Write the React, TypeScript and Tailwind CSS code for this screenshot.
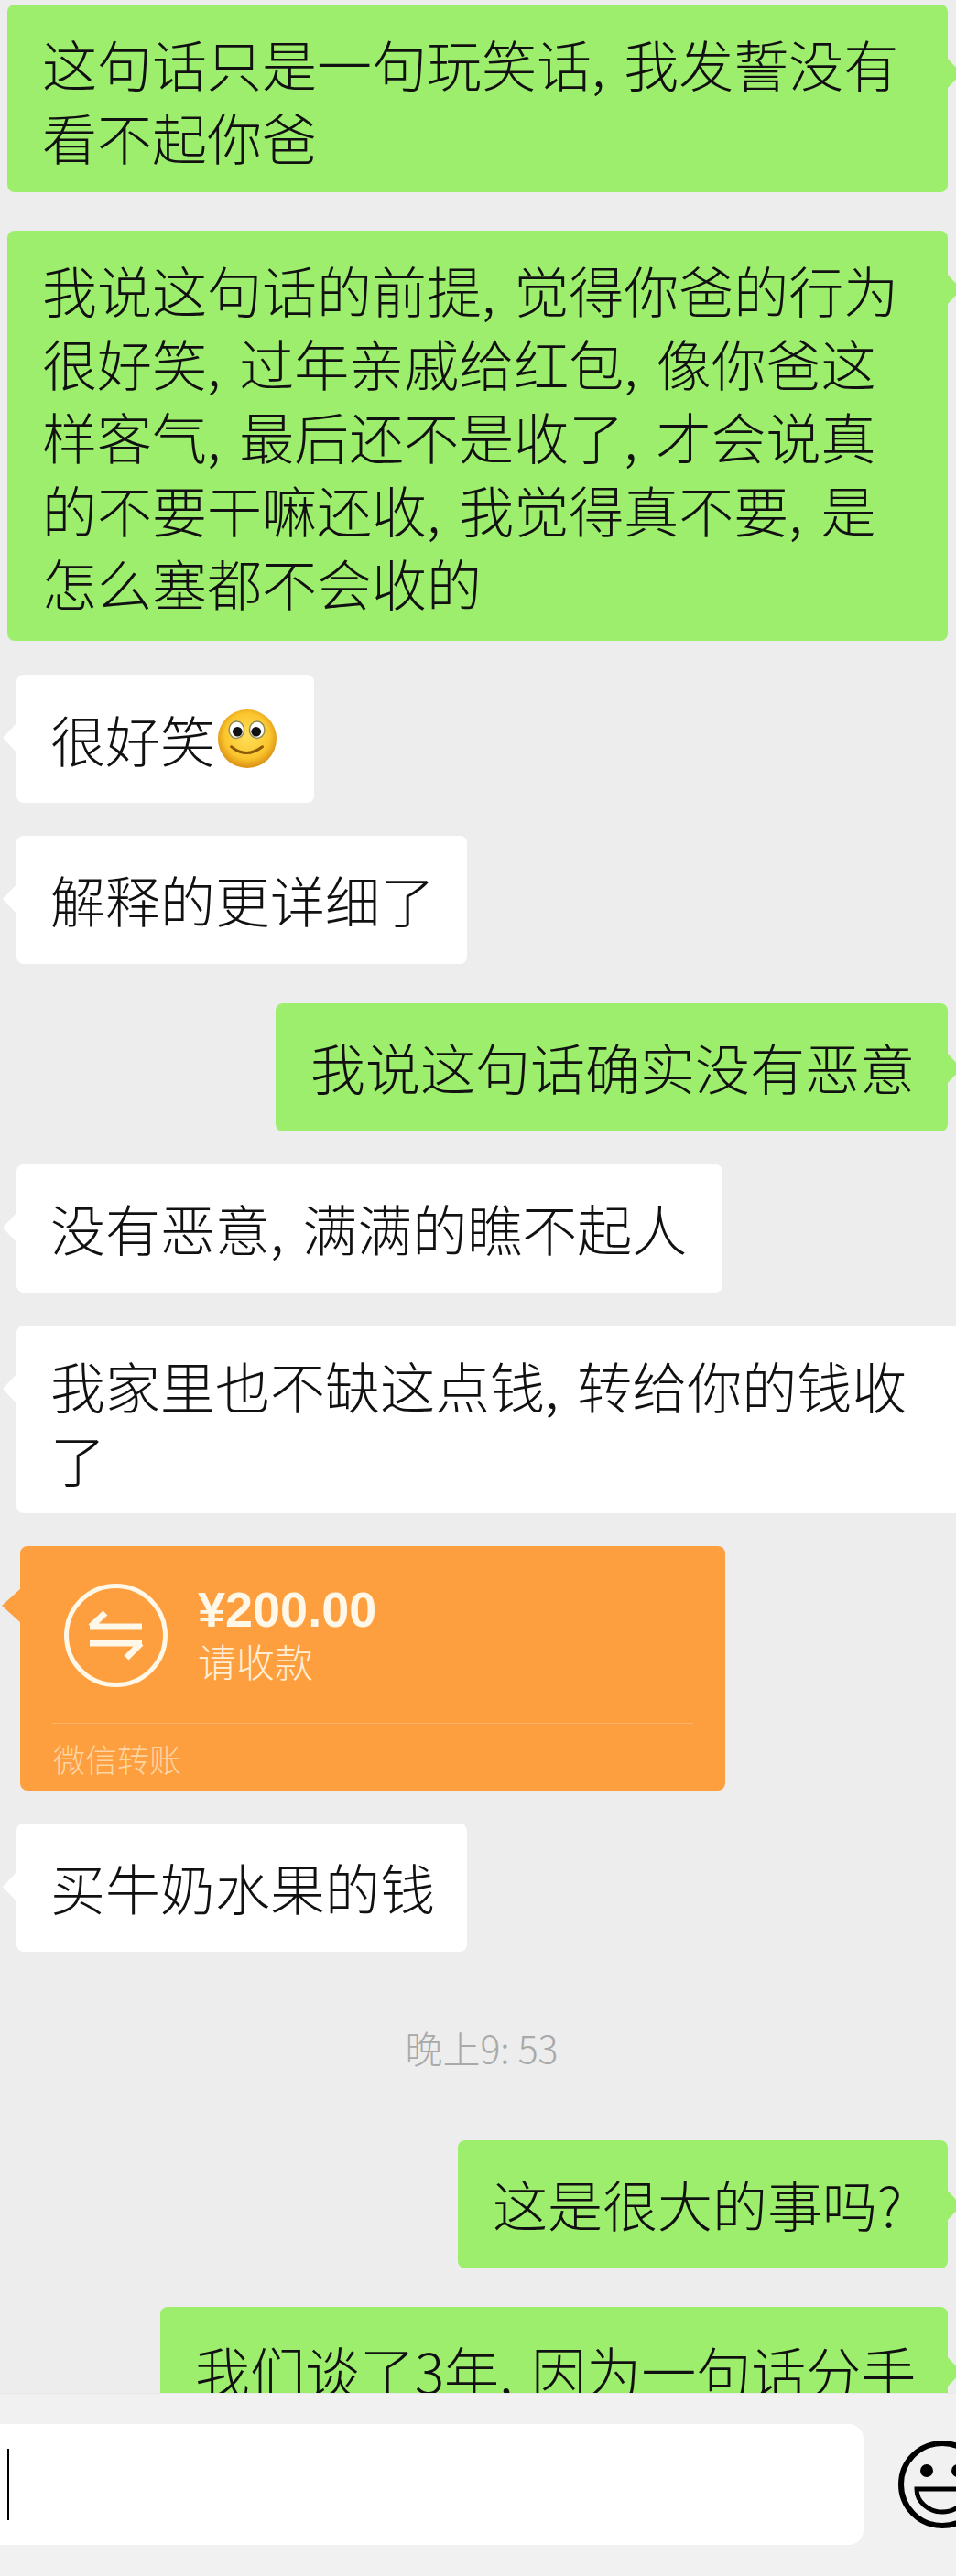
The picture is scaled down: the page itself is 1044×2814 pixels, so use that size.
const CJK = "font-['Noto_Sans_CJK_SC','Liberation_Sans',sans-serif]"

function Tail({ side, top, color, w = 16, h = 34 }: { side: 'left' | 'right'; top: number; color: string; w?: number; h?: number }) {
  return (
    <svg
      width={w}
      height={h}
      viewBox={`0 0 ${w} ${h}`}
      className="absolute"
      style={side === 'left' ? { top, left: -w + 1 } : { top, right: -w + 1 }}
    >
      <path d={side === 'left' ? `M${w} 0 L0 ${h / 2} L${w} ${h} Z` : `M0 0 L${w} ${h / 2} L0 ${h} Z`} fill={color} />
    </svg>
  )
}

function Sent({ lines, className, tailTop = 54 }: { lines: string[]; className: string; tailTop?: number }) {
  return (
    <div className={`relative mr-[9px] shrink-0 self-end rounded-lg bg-[#9eee6e] pl-[38px] text-[60px] leading-[80px] font-light [word-spacing:7px] text-[#111] ${className}`}>
      {lines.map((l) => (
        <div key={l} className="whitespace-nowrap">{l}</div>
      ))}
      <Tail side="right" top={tailTop} color="#9eee6e" />
    </div>
  )
}

function Received({ lines, className }: { lines: string[]; className: string }) {
  return (
    <div className={`relative ml-[18px] shrink-0 self-start rounded-lg bg-white pl-[37px] text-[60px] leading-[80px] font-light [word-spacing:7px] text-[#111] ${className}`}>
      {lines.map((l) => (
        <div key={l} className="whitespace-nowrap">{l}</div>
      ))}
      <Tail side="left" top={52} color="#ffffff" />
    </div>
  )
}

function SmileEmoji() {
  return (
    <svg width="68" height="68" viewBox="0 0 70 70" className="ml-[1px] shrink-0">
      <defs>
        <radialGradient id="face" cx="50%" cy="45%" r="55%">
          <stop offset="0%" stopColor="#ffe05a" />
          <stop offset="70%" stopColor="#fbc52e" />
          <stop offset="100%" stopColor="#d98f12" />
        </radialGradient>
      </defs>
      <circle cx="35" cy="35" r="33" fill="url(#face)" />
      <ellipse cx="23" cy="25" rx="8.5" ry="9.5" fill="#fff" stroke="#8d8a58" strokeWidth="1.5" />
      <ellipse cx="46" cy="25" rx="8.5" ry="9.5" fill="#fff" stroke="#8d8a58" strokeWidth="1.5" />
      <circle cx="24" cy="27" r="5.5" fill="#111" />
      <circle cx="45" cy="27" r="5.5" fill="#111" />
      <path d="M17 44 Q34 58 52 44" fill="none" stroke="#8a5a08" strokeWidth="3" strokeLinecap="round" />
    </svg>
  )
}

function TransferCard() {
  return (
    <div className="relative mt-[36px] ml-[22px] h-[267px] w-[770px] shrink-0 self-start rounded-lg bg-[#fe9f3f]">
      <Tail side="left" top={46} color="#fe9f3f" w={21} h={38} />
      <div className="flex h-[193px] items-start pl-[48px] pt-[41px]">
        <svg width="113" height="113" viewBox="0 0 113 113" fill="none" stroke="#fff8e8" className="shrink-0">
          <circle cx="56.5" cy="56.5" r="54" strokeWidth="5" />
          <path d="M28 47 H85 M45 32 L29 47" strokeWidth="7" />
          <path d="M85 65 H28 M68 81 L84 65" strokeWidth="7" />
        </svg>
        <div className="ml-[33px] flex flex-col">
          <div className="text-[54px] leading-[56px] font-bold text-[#fff8e8] font-['Liberation_Sans',sans-serif]">¥200.00</div>
          <div className="text-[42px] leading-[56px] font-light text-[#ffefd6]">请收款</div>
        </div>
      </div>
      <div className="mx-[35px] h-[1px] bg-[#fdb368]" />
      <div className="pl-[36px] pt-[16px] text-[35px] leading-[44px] font-light text-[#fcd5a5]">微信转账</div>
    </div>
  )
}

export default function App() {
  return (
    <div className={`flex h-[2814px] w-[1044px] flex-col overflow-hidden bg-[#ededed] ${CJK}`}>
      <div className="flex h-[2614px] shrink-0 flex-col overflow-hidden pt-[5px]">
        <Sent
          lines={['这句话只是一句玩笑话, 我发誓没有', '看不起你爸']}
          className="h-[205px] w-[1027px] pt-[24px]"
          tailTop={58}
        />
        <Sent
          lines={[
            '我说这句话的前提, 觉得你爸的行为',
            '很好笑, 过年亲戚给红包, 像你爸这',
            '样客气, 最后还不是收了, 才会说真',
            '的不要干嘛还收, 我觉得真不要, 是',
            '怎么塞都不会收的',
          ]}
          className="mt-[42px] h-[448px] w-[1027px] pt-[24px]"
          tailTop={47}
        />
        <div className="relative mt-[37px] ml-[18px] flex h-[140px] w-[325px] shrink-0 items-center self-start rounded-lg bg-white pl-[37px] text-[60px] font-light text-[#111]">
          很好笑
          <SmileEmoji />
          <Tail side="left" top={52} color="#ffffff" />
        </div>
        <Received lines={['解释的更详细了']} className="mt-[36px] h-[140px] w-[492px] pt-[29px]" />
        <Sent lines={['我说这句话确实没有恶意']} className="mt-[43px] h-[140px] w-[734px] pt-[29px]" />
        <Received lines={['没有恶意, 满满的瞧不起人']} className="mt-[36px] h-[140px] w-[771px] pt-[29px]" />
        <div className="relative mt-[36px] ml-[18px] h-[205px] w-[1026px] shrink-0 self-start rounded-l-lg bg-white pl-[37px] pt-[25px] text-[60px] leading-[80px] font-light [word-spacing:7px] text-[#111]">
          <div className="whitespace-nowrap">我家里也不缺这点钱, 转给你的钱收</div>
          <div>了</div>
          <Tail side="left" top={52} color="#ffffff" />
        </div>
        <TransferCard />
        <Received lines={['买牛奶水果的钱']} className="mt-[36px] h-[140px] w-[492px] pt-[29px]" />
        <div className="mt-[76px] shrink-0 self-center pl-[8px] text-[41px] leading-[56px] font-light text-[#a9a9a9]">晚上9: 53</div>
        <Sent lines={['这是很大的事吗?']} className="mt-[74px] h-[140px] w-[535px] pt-[29px]" />
        <Sent lines={['我们谈了3年, 因为一句话分手']} className="mt-[42px] h-[200px] w-[860px] pt-[29px]" tailTop={54} />
      </div>
      <div className="flex h-[200px] shrink-0 items-start overflow-hidden border-t border-[#e8e8e8] bg-[#f1f1f1] pt-[33px]">
        <div className="flex h-[132px] w-[943px] shrink-0 items-center rounded-r-2xl bg-white pl-[8px]">
          <div className="h-[78px] w-[2px] bg-black" />
        </div>
        <svg width="96" height="96" viewBox="0 0 96 96" fill="none" stroke="#000" className="ml-[38px] mt-[18px] shrink-0">
          <circle cx="48" cy="48" r="45" strokeWidth="6" />
          <circle cx="31" cy="33" r="7" fill="#000" stroke="none" />
          <circle cx="65" cy="33" r="7" fill="#000" stroke="none" />
          <path d="M20 53 H76 A28 25 0 0 1 20 53 Z" strokeWidth="5" />
        </svg>
      </div>
    </div>
  )
}
